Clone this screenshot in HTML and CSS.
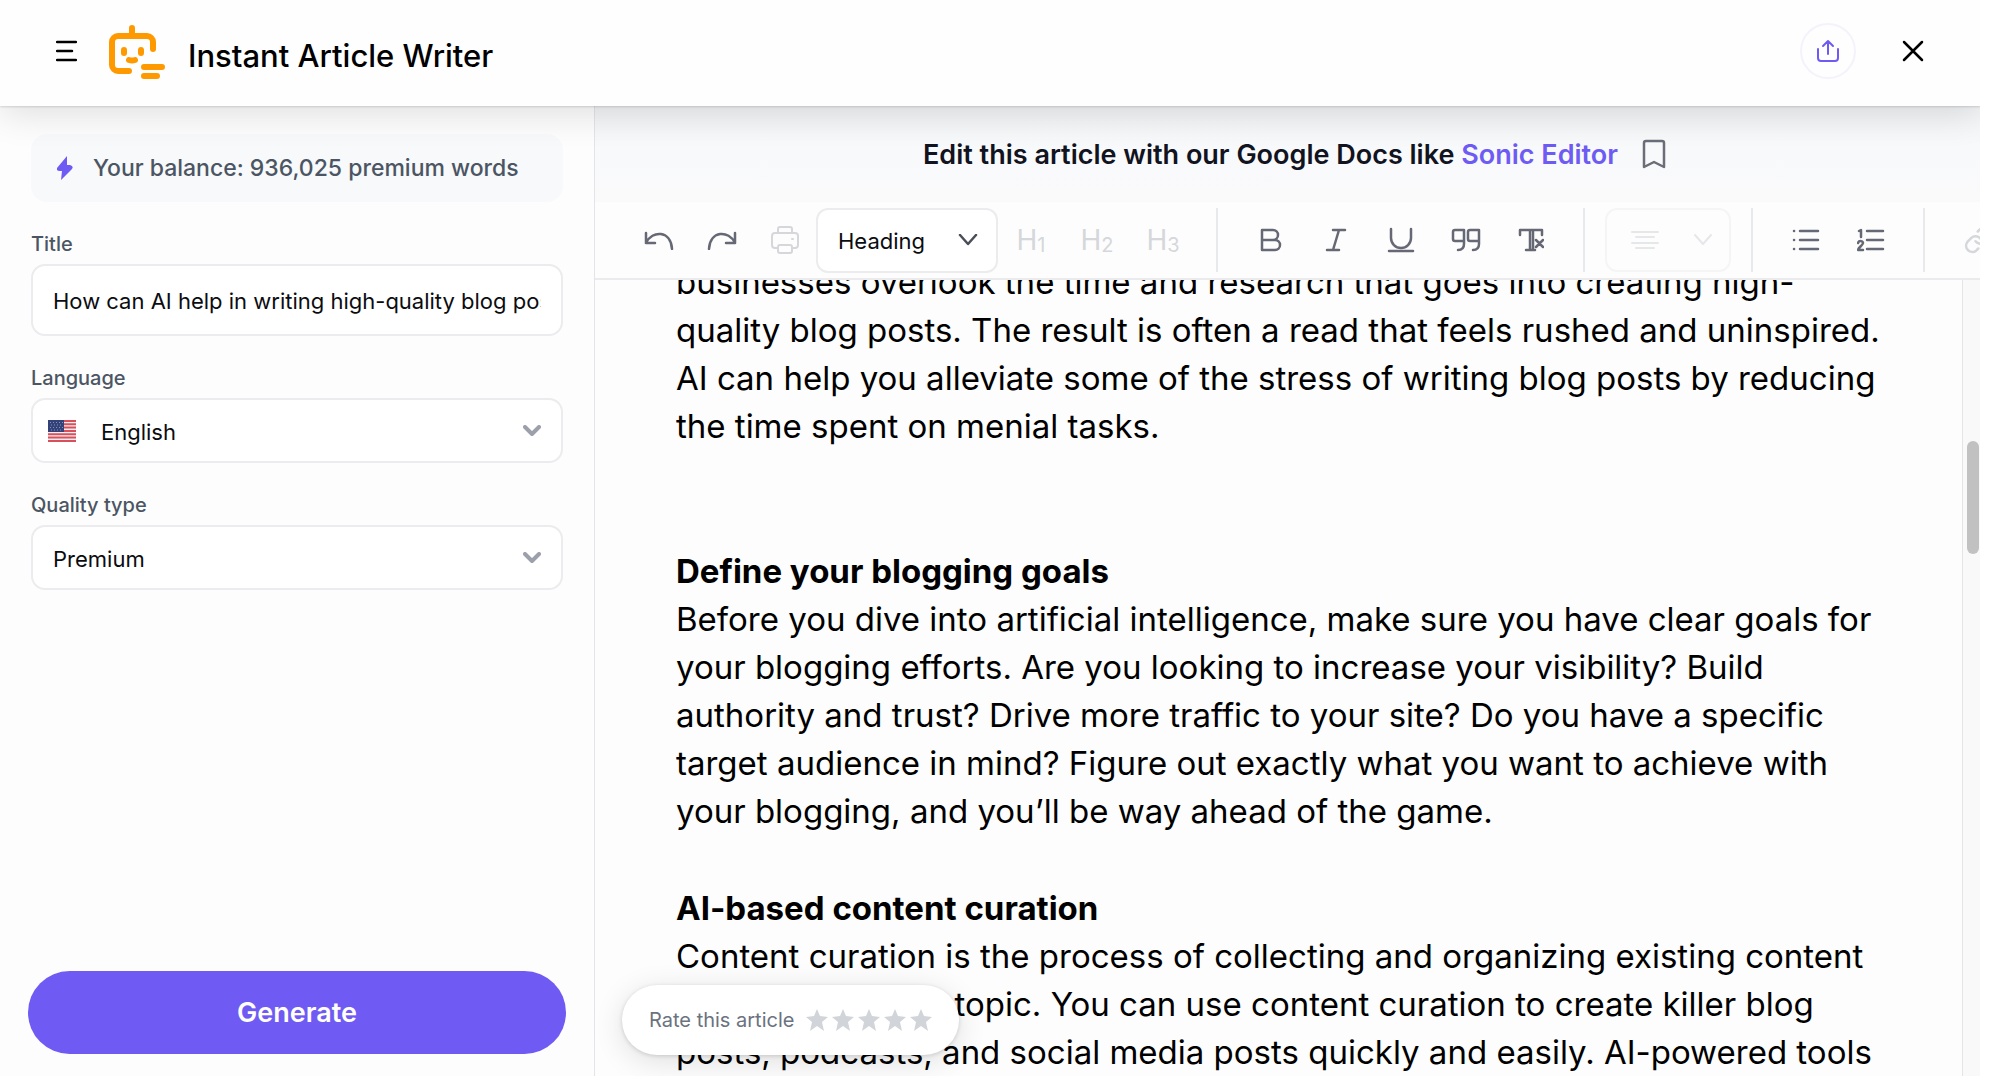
FILE: index.html
```html
<!DOCTYPE html>
<html lang="en">
<head>
  <meta charset="UTF-8">
  <meta name="viewport" content="width=device-width, initial-scale=1.0">
  <title>Instant Article Writer</title>
  <link rel="stylesheet" href="styles.css">
</head>
<body>

<div class="app">
  <header class="header">
    <button class="icon-btn" aria-label="Menu">
      <svg width="21" height="22" viewBox="0 0 21 22"><path d="M1 2h19M1 11h15M1 20h19"/></svg>
    </button>
    <svg class="logo" width="58" height="56" viewBox="0 0 58 56">
      <path d="M24 3v7M45 24V17a6 6 0 0 0-6-6H10a6 6 0 0 0-6 6v23a6 6 0 0 0 6 6h11M36 42h18M36 51h13"/>
      <path d="M16 25v3M33 25v3M21 35q3 1 6 0"/>
    </svg>
    <h1>Instant Article Writer</h1>
    <button class="share" aria-label="Share">
      <svg width="24" height="24" viewBox="0 0 24 24"><path d="M2 10v9a3 3 0 0 0 3 3h14a3 3 0 0 0 3-3v-9M12 15V2M7 7l5-5 5 5"/></svg>
    </button>
    <button class="icon-btn" aria-label="Close">
      <svg width="22" height="22" viewBox="0 0 22 22"><path d="M2 2l18 18M20 2L2 20"/></svg>
    </button>
  </header>

  <div class="main">
    <form class="sidebar">
      <div class="fields">
        <div class="balance">
          <svg width="16" height="24" viewBox="0 0 16 24"><path d="M10 0L0 12q-1 3 3 3h2l-1 9 11-11q2-3-2-4h-3z"/></svg>
          <span>Your balance: 936,025 premium words</span>
        </div>
        <div class="field">
          <label for="title">Title</label>
          <input type="text" id="title" value="How can AI help in writing high-quality blog posts">
        </div>
        <div class="field">
          <label for="language">Language</label>
          <div class="select">
            <svg class="flag" width="28" height="22" viewBox="0 0 28 22">
              <path fill="#f6eef0" d="M0 0h28v22H0z"/>
              <path stroke="#d8505c" stroke-width="2" d="M0 1h28M0 4.300h28M0 7.600h28M0 11h28M0 14.300h28M0 17.600h28M0 21h28"/>
              <path fill="#34427a" d="M0 0h16v12H0z"/>
              <path stroke="#8792b8" stroke-dasharray="1 2" d="M2 2.500h13M3 5h12M2 7.500h13M3 10h12"/>
            </svg>
            <select id="language" class="with-flag"><option>English</option></select>
            <svg class="arrow" width="18" height="12" viewBox="0 0 18 12"><path d="M2 2l7 7 7-7"/></svg>
          </div>
        </div>
        <div class="field">
          <label for="quality">Quality type</label>
          <div class="select">
            <select id="quality"><option>Premium</option></select>
            <svg class="arrow" width="18" height="12" viewBox="0 0 18 12"><path d="M2 2l7 7 7-7"/></svg>
          </div>
        </div>
      </div>
      <button type="button" class="generate">Generate</button>
    </form>

    <section class="editor">
      <div class="banner">
        <p>Edit this article with our Google Docs like <a href="#">Sonic Editor</a></p>
        <button class="bookmark" aria-label="Bookmark">
          <svg width="24" height="30" viewBox="0 0 24 30"><path d="M2 4a2 2 0 0 1 2-2h16a2 2 0 0 1 2 2v24l-10-5-10 5z"/></svg>
        </button>
      </div>

      <div class="toolbar">
        <div class="history">
          <button aria-label="Undo"><svg width="30" height="20" viewBox="0 0 30 20"><path d="M2 3v10h9M2 13C8 0 27 0 28 19"/></svg></button>
          <button aria-label="Redo"><svg width="30" height="20" viewBox="0 0 30 20"><path d="M28 3v10h-9M28 13C22 0 3 0 2 19"/></svg></button>
          <button class="off" aria-label="Print"><svg width="28" height="28" viewBox="0 0 28 28"><path d="M7 22H4a3 3 0 0 1-3-3V10a3 3 0 0 1 3-3h20a3 3 0 0 1 3 3v9a3 3 0 0 1-3 3h-3M7 7V3a2 2 0 0 1 2-2h10a2 2 0 0 1 2 2v4M9 19h10a2 2 0 0 1 2 2v4a2 2 0 0 1-2 2H9a2 2 0 0 1-2-2v-4a2 2 0 0 1 2-2zM21 13h1"/></svg></button>
        </div>
        <div class="style-select">
          <select aria-label="Text style"><option>Heading</option></select>
          <svg class="arrow" width="20" height="12" viewBox="0 0 20 12"><path d="M2 1l8 9 8-9"/></svg>
        </div>
        <div class="tools">
          <button class="off heading-btn">H<sub>1</sub></button>
          <button class="off heading-btn">H<sub>2</sub></button>
          <button class="off heading-btn">H<sub>3</sub></button>
        </div>
        <div class="tools">
          <button aria-label="Bold"><svg width="22" height="24" viewBox="0 0 22 24"><path d="M2 2h11a5 5 0 0 1 0 10H2zM2 12h13a5 5 0 0 1 0 10H2z"/></svg></button>
          <button aria-label="Italic"><svg width="22" height="24" viewBox="0 0 22 24"><path d="M8 2h12M2 22h12M14 2L8 22"/></svg></button>
          <button aria-label="Underline"><svg width="28" height="26" viewBox="0 0 28 26"><path d="M4 2v9a10 10 0 0 0 20 0V2M2 24h24"/></svg></button>
          <button aria-label="Quote"><svg width="30" height="24" viewBox="0 0 30 24"><path d="M13 13H4a2 2 0 0 1-2-2V4a2 2 0 0 1 2-2h9v14c0 4-2 6-6 6M28 13h-9a2 2 0 0 1-2-2V4a2 2 0 0 1 2-2h9v14c0 4-2 6-6 6"/></svg></button>
          <button aria-label="Clear formatting"><svg width="26" height="24" viewBox="0 0 26 24"><path d="M2 7V2h22v5M12 2v20M15 2v20M8 22h9M18 12l7 7M25 12l-7 7"/></svg></button>
        </div>
        <div class="tools">
          <button class="align off" aria-label="Align">
            <svg width="28" height="20" viewBox="0 0 28 20"><path d="M1 2h26M5 7h18M1 13h26M5 18h18"/></svg>
            <svg width="20" height="12" viewBox="0 0 20 12"><path d="M2 1l8 9 8-9"/></svg>
          </button>
        </div>
        <div class="tools">
          <button aria-label="Bulleted list"><svg width="28" height="22" viewBox="0 0 28 22"><path d="M8 2h18M8 11h18M8 20h18M2 2h.100M2 11h.100M2 20h.100"/></svg></button>
          <button aria-label="Numbered list"><svg width="28" height="24" viewBox="0 0 28 24"><path d="M10 3h16M10 12h16M10 21h16"/><path d="M2 3l2-1v7M1 15c1-3 5-2 5 0 0 2-5 5-5 7h5"/></svg></button>
        </div>
        <div class="tools">
          <button class="off" aria-label="Link"><svg width="30" height="30" viewBox="0 0 24 24"><path d="M10 13a5 5 0 0 0 7.500.5l3-3a5 5 0 0 0-7-7l-1.700 1.700M14 11a5 5 0 0 0-7.500-.5l-3 3a5 5 0 0 0 7 7l1.700-1.700"/></svg></button>
        </div>
      </div>

      <div class="content">
        <article class="article">
          <p>businesses overlook the time and research that goes into creating high-quality blog posts. The result is often a read that feels rushed and uninspired. AI can help you alleviate some of the stress of writing blog posts by reducing the time spent on menial tasks.</p>
          <p class="blank"><br></p>
          <h2>Define your blogging goals</h2>
          <p>Before you dive into artificial intelligence, make sure you have clear goals for your blogging efforts. Are you looking to increase your visibility? Build authority and trust? Drive more traffic to your site? Do you have a specific target audience in mind? Figure out exactly what you want to achieve with your blogging, and you’ll be way ahead of the game.</p>
          <h2>AI-based content curation</h2>
          <p>Content curation is the process of collecting and organizing existing content around a specific topic. You can use content curation to create killer blog posts, podcasts, and social media posts quickly and easily. AI-powered tools</p>
        </article>
        <div class="scrollbar"><div class="thumb"></div></div>
      </div>

      <div class="rate">
        <span>Rate this article</span>
        <div class="stars">
          <button aria-label="1 star"><svg width="22" height="22" viewBox="0 0 22 22"><path d="M11 0l3 7 8 1-6 5 2 9-7-5-7 5 2-9-6-5 8-1z"/></svg></button>
          <button aria-label="2 stars"><svg width="22" height="22" viewBox="0 0 22 22"><path d="M11 0l3 7 8 1-6 5 2 9-7-5-7 5 2-9-6-5 8-1z"/></svg></button>
          <button aria-label="3 stars"><svg width="22" height="22" viewBox="0 0 22 22"><path d="M11 0l3 7 8 1-6 5 2 9-7-5-7 5 2-9-6-5 8-1z"/></svg></button>
          <button aria-label="4 stars"><svg width="22" height="22" viewBox="0 0 22 22"><path d="M11 0l3 7 8 1-6 5 2 9-7-5-7 5 2-9-6-5 8-1z"/></svg></button>
          <button aria-label="5 stars"><svg width="22" height="22" viewBox="0 0 22 22"><path d="M11 0l3 7 8 1-6 5 2 9-7-5-7 5 2-9-6-5 8-1z"/></svg></button>
        </div>
      </div>
    </section>
  </div>
</div>

</body>
</html>
```
FILE: styles.css
```css
* {
  box-sizing: border-box;
}

body {
  font-family: Inter, 'Liberation Sans', sans-serif;
  margin: 0;
  height: 100vh;
  padding: 0 20px 15px 0;
  background-color: #fff;
  color: #0b0c10;
}

h1, h2, p {
  margin: 0;
}

button {
  font-family: inherit;
  background: none;
  border: 0;
  padding: 0;
  cursor: pointer;
}

svg {
  display: block;
  flex: none;
  fill: none;
  stroke: currentColor;
  stroke-width: 2;
  stroke-linecap: round;
  stroke-linejoin: round;
}

.app {
  height: 100%;
  display: flex;
  flex-direction: column;
  overflow: hidden;
  background-color: #fdfdfd;
}

/* header */
.header {
  position: relative;
  z-index: 2;
  flex: none;
  display: flex;
  align-items: center;
  height: 106px;
  padding: 0 56px 4px;
  background-color: #fefefe;
  box-shadow: 0 1px 2px rgba(0, 0, 0, 0.14), 0 8px 36px rgba(0, 0, 0, 0.12);
}

.header h1 {
  flex: 1;
  margin-left: 22px;
  padding-top: 8px;
  font-size: 31px;
  font-weight: 500;
  color: #000;
}

.icon-btn svg {
  stroke-width: 2.5;
}

.logo {
  margin-left: 31px;
  margin-top: 4px;
  color: #ff9900;
  stroke-width: 6;
}

.share {
  width: 56px;
  height: 56px;
  margin-right: 46px;
  display: flex;
  align-items: center;
  justify-content: center;
  border: 2px solid #f4f2fc;
  border-radius: 50%;
  color: #6e5bf3;
}

.main {
  flex: 1;
  min-height: 0;
  display: flex;
}

/* sidebar */
.sidebar {
  flex: 0 0 30%;
  display: flex;
  flex-direction: column;
  justify-content: space-between;
  padding: 28px 28px 22px;
}

.fields {
  padding: 0 3px;
}

.balance {
  display: flex;
  align-items: center;
  gap: 20px;
  height: 68px;
  padding: 0 26px;
  margin-bottom: 24px;
  border-radius: 16px;
  background-color: #f7f9fa;
  color: #4b5563;
  font-size: 23px;
  font-weight: 500;
}

.balance svg {
  fill: #6e5bf3;
  stroke: none;
}

.field {
  margin-bottom: 24px;
}

.field label {
  display: block;
  margin-bottom: 2px;
  line-height: 36px;
  font-size: 20px;
  font-weight: 500;
  color: #4b5563;
}

.field input,
.field select {
  display: block;
  width: 100%;
  height: 65px;
  padding: 2px 20px 0;
  border: 2px solid #ececee;
  border-radius: 14px;
  background-color: #fff;
  font-family: inherit;
  font-size: 22px;
  color: #0b0c10;
}

.field input {
  height: 72px;
}

select {
  appearance: none;
}

.field .with-flag {
  padding-left: 68px;
}

.select,
.style-select {
  position: relative;
  display: flex;
  align-items: center;
}

.flag {
  position: absolute;
  left: 17px;
  stroke-width: 1;
  stroke: none;
  stroke-linecap: butt;
}

.arrow {
  position: absolute;
  right: 22px;
  color: #9ca0ab;
  stroke-width: 4;
  pointer-events: none;
}

.generate {
  height: 83px;
  border-radius: 42px;
  background-color: #6f5bf3;
  color: #fff;
  font-size: 27px;
  font-weight: 600;
}

/* editor */
.editor {
  position: relative;
  flex: 1;
  min-width: 0;
  display: flex;
  flex-direction: column;
  border-left: 1px solid #e3e4e8;
}

.banner {
  flex: none;
  display: flex;
  align-items: center;
  justify-content: center;
  gap: 24px;
  height: 96px;
  padding-left: 14px;
  background: linear-gradient(#f3f4f6, #f8f9fb 40%, #fafafb);
  font-size: 27px;
  font-weight: 600;
  color: #11131f;
}

.banner a {
  color: #6e5bf3;
  text-decoration: none;
}

.bookmark {
  color: #6b6e78;
}

.bookmark svg {
  stroke-width: 2.5;
}

.toolbar {
  flex: none;
  display: flex;
  align-items: center;
  height: 78px;
  padding-left: 32px;
  border-bottom: 2px solid #ebebed;
  overflow: hidden;
  color: #666975;
}

.toolbar button {
  display: flex;
  align-items: center;
  justify-content: center;
  height: 64px;
  width: 65px;
  flex: none;
  color: inherit;
}

.toolbar svg {
  stroke-width: 2.5;
}

.toolbar .off {
  color: #d5d7da;
}

.toolbar .off svg {
  stroke-width: 2;
}

.history {
  display: flex;
}

.toolbar .history button {
  width: 63px;
}

.style-select {
  flex: none;
}

.style-select select {
  width: 182px;
  height: 65px;
  padding: 2px 20px 0;
  border: 2px solid #ececee;
  border-radius: 12px;
  background-color: #fff;
  font-family: inherit;
  font-size: 22px;
  color: #0b0c10;
}

.style-select .arrow {
  right: 20px;
  color: #4b4e58;
}

.tools {
  flex: none;
  display: flex;
}

.tools + .tools {
  margin-left: 20px;
  padding-left: 20px;
  border-left: 2px solid #e8e9ec;
}

.toolbar .heading-btn {
  width: 66px;
  font-size: 28px;
}

.heading-btn sub {
  align-self: center;
  padding-top: 10px;
  font-size: 20px;
}

.toolbar .align {
  width: 126px;
  padding-left: 8px;
  gap: 34px;
  border: 2px solid #f5f5f6;
  border-radius: 12px;
  color: #e5e7e9;
}

/* article text */
.content {
  flex: 1;
  min-height: 0;
  display: flex;
  overflow: hidden;
}

.article {
  flex: 1;
  margin-top: -22px;
  padding: 0 64px 0 81px;
  font-size: 33px;
  line-height: 48px;
  color: #000;
}

.article p {
  margin-bottom: 49px;
}

.article .blank {
  margin-bottom: 0;
}

.article h2 {
  font-size: 33px;
  line-height: 48px;
  font-weight: 700;
}

.scrollbar {
  width: 18px;
  padding: 161px 1px 0 4px;
  border-left: 1px solid #e4e4e4;
  background-color: #f9f9f9;
}

.thumb {
  height: 113px;
  border-radius: 6px;
  background-color: #c1c1c1;
}

.rate {
  position: absolute;
  left: 27px;
  bottom: 21px;
  display: flex;
  align-items: center;
  gap: 12px;
  height: 70px;
  padding: 0 27px;
  border-radius: 35px;
  background-color: #fff;
  box-shadow: 0 1px 4px rgba(0, 0, 0, 0.15), 0 6px 30px rgba(0, 0, 0, 0.12);
  color: #6b7280;
  font-size: 20px;
}

.stars {
  display: flex;
  gap: 4px;
}

.stars svg {
  fill: #d1d4d9;
  stroke: none;
}
```
